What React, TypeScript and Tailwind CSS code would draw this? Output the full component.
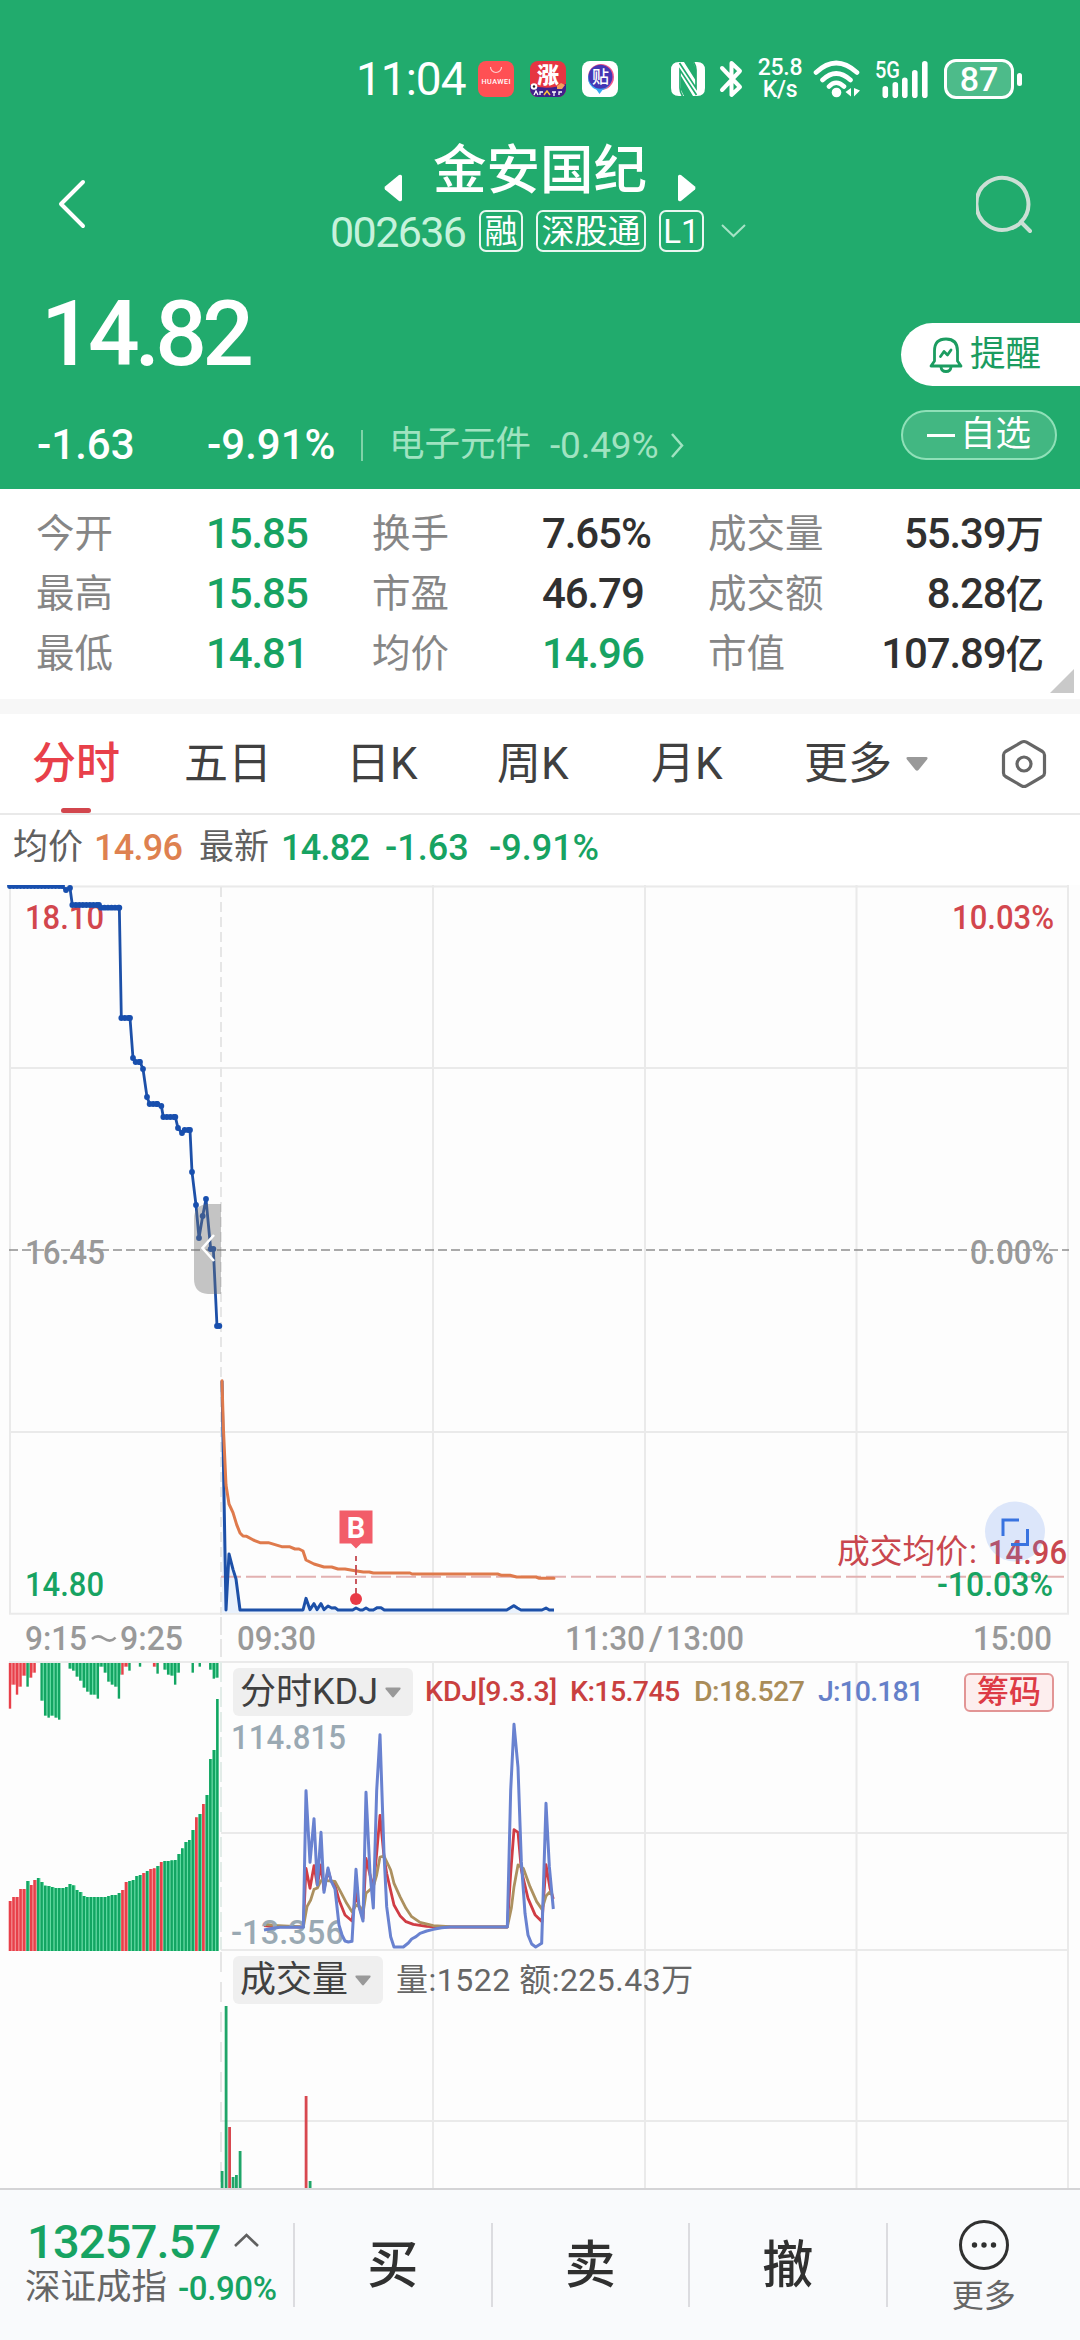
import type { ReactNode } from 'react'
import clsx from 'clsx'

type Point = [number, number]

// Chart data is stored in ticks, three ticks per pixel
const TICK = 3

const toPoints = (data: Point[], dx: number, dy: number) =>
  data.map(([x, y]) => `${((x + dx) / TICK).toFixed(2)},${((y + dy) / TICK).toFixed(2)}`).join(' ')

const auction: Point[] = [
  [30, 3], [186, 3], [198, 15], [210, 9], [217, 60], [297, 60], [303, 68], [358, 68], [364, 399], [390, 399],
  [399, 519], [407, 531], [420, 531], [429, 552], [441, 636], [449, 657], [472, 657], [484, 663], [490, 696],
  [526, 696], [534, 729], [546, 744], [554, 735], [570, 735], [576, 861], [588, 960], [597, 1059], [608, 993],
  [618, 942], [632, 1092], [640, 1092], [651, 1323], [658, 1323],
]

const price: Point[] = [
  [66, 62], [78, 750], [87, 582], [99, 628], [108, 657], [120, 750], [309, 750], [318, 715], [330, 749], [342, 731],
  [351, 749], [363, 731], [372, 749], [384, 738], [395, 744], [405, 743], [414, 750], [458, 750], [468, 744],
  [480, 750], [488, 750], [498, 744], [508, 750], [520, 750], [532, 743], [543, 743], [553, 750], [920, 750],
  [930, 744], [942, 737], [952, 744], [963, 750], [1026, 750], [1038, 744], [1048, 750], [1062, 750],
]

const average: Point[] = [
  [66, 62], [70, 200], [78, 375], [87, 432], [99, 458], [110, 494], [120, 519], [129, 528], [140, 529], [160, 540],
  [180, 548], [205, 548], [245, 560], [268, 560], [285, 567], [297, 567], [309, 573], [318, 600], [342, 612],
  [372, 621], [395, 621], [414, 627], [435, 627], [465, 632], [490, 636], [508, 636], [520, 639], [630, 639],
  [636, 642], [893, 642], [905, 646], [930, 646], [950, 651], [1008, 651], [1018, 655], [1062, 655],
]

const kdjJ: Point[] = [
  [132, 870], [160, 865], [180, 862], [250, 862], [258, 452], [270, 667], [282, 536], [292, 735], [303, 577],
  [312, 757], [324, 684], [333, 722], [345, 747], [357, 855], [366, 885], [375, 903], [385, 906], [396, 904],
  [408, 688], [417, 800], [429, 843], [438, 457], [450, 700], [460, 804], [470, 452], [480, 284], [492, 640],
  [500, 800], [512, 890], [522, 921], [550, 921], [565, 909], [575, 897], [588, 890], [600, 880], [620, 873],
  [640, 868], [665, 863], [690, 861], [862, 861], [872, 452], [882, 253], [894, 382], [904, 665], [915, 820],
  [924, 885], [935, 912], [947, 921], [965, 910], [978, 490], [988, 680], [1000, 807],
]

const kdjK: Point[] = [
  [132, 857], [160, 860], [250, 861], [258, 685], [270, 745], [282, 677], [292, 735], [303, 675], [312, 750],
  [324, 690], [333, 722], [345, 735], [357, 780], [375, 825], [396, 843], [408, 760], [417, 800], [429, 835],
  [438, 655], [460, 745], [470, 640], [480, 526], [492, 650], [500, 700], [522, 795], [540, 827], [558, 845],
  [580, 853], [620, 859], [660, 861], [862, 861], [872, 700], [882, 569], [894, 577], [904, 690], [924, 775],
  [945, 824], [966, 845], [978, 674], [990, 745], [1000, 777],
]

const kdjD: Point[] = [
  [132, 852], [160, 856], [250, 861], [261, 800], [272, 780], [282, 748], [292, 744], [303, 722], [318, 722],
  [345, 724], [360, 752], [380, 790], [396, 815], [408, 795], [420, 800], [429, 820], [438, 760], [460, 740],
  [470, 705], [480, 651], [492, 648], [512, 690], [522, 730], [540, 770], [558, 805], [575, 830], [600, 847],
  [640, 857], [690, 860], [862, 861], [874, 805], [882, 740], [894, 675], [910, 685], [930, 740], [950, 785],
  [966, 808], [978, 768], [988, 757], [998, 765],
]

// Call auction: matched volume grows upwards, unmatched volume hangs from the top
const matched = [
  150, 162, 162, 186, 186, 210, 198, 213, 219, 207, 196, 195, 192, 189, 189, 189, 192, 201, 197, 183, 177, 165, 162,
  162, 162, 162, 162, 162, 165, 168, 168, 174, 183, 207, 210, 213, 225, 228, 234, 240, 246, 248, 255, 267, 270, 270,
  272, 273, 291, 308, 327, 333, 363, 401, 411, 441, 468, 576, 603, 756,
]
const matchedUp = [0, 1, 2, 3, 4, 6, 7, 32, 33, 38, 40, 41, 43, 53, 55]

const unmatched = [
  137, 65, 95, 71, 38, 71, 44, 29, 0, 113, 158, 164, 158, 164, 170, 0, 0, 17, 23, 41, 53, 74, 86, 95, 95, 107, 11, 29,
  56, 65, 71, 107, 35, 11, 23, 0, 0, 11, 0, 0, 0, 11, 32, 0, 20, 35, 38, 65, 29, 0, 0, 0, 29, 0, 11, 0, 0, 20, 47, 44,
]
const unmatchedUp = [0, 1, 2, 3, 4, 6, 7, 32, 33, 41]

const volumes = [
  { x: 222, h: 18, up: false },
  { x: 229.5, h: 62, up: true },
  { x: 226, h: 183, up: false },
  { x: 233, h: 12, up: false },
  { x: 236.3, h: 14, up: false },
  { x: 240, h: 38, up: false },
  { x: 306, h: 93, up: true },
  { x: 310, h: 8, up: false },
]

// Flat stretches of the auction line carry one dot per quote
const auctionDots = auction.flatMap(([x, y], i): Point[] => {
  const next = auction[i + 1]
  if (!next || next[1] !== y) return [[x, y]]
  const dots: Point[] = []
  for (let px = x; px < next[0]; px += 10.5) dots.push([px, y])
  return dots
})

const UP = '#e8404a'
const DOWN = '#12a562'
const GRID = '#eaeaea'
const COLUMNS = [433, 645, 856.5]

function Caret({ className }: { className: string }) {
  return (
    <svg viewBox="0 0 22 14" className={className}>
      <path d="M2 0H20Q22.500 0 21 2.500L12.500 13Q11 14.500 9.500 13L1 2.500Q-.5 0 2 0Z" fill="#999" />
    </svg>
  )
}

function StatusBar() {
  return (
    <div className="flex h-[80px] items-center pl-[356px] text-white">
      <span className="w-[122px] text-[46px] leading-none tracking-[-1px]">11:04</span>
      <svg width="36" height="36" viewBox="0 0 36 36">
        <rect width="36" height="36" rx="8" fill="#ff5054" />
        <path d="M12.500 6a5.500 5.500 0 0 0 11 0" fill="none" stroke="#ffd0d0" strokeWidth="1.200" />
        <text x="18" y="23.300" fontSize="7.200" fontWeight="500" textAnchor="middle" textLength="29" fill="#fff">HUAWEI</text>
      </svg>
      <svg width="36" height="36" viewBox="0 0 36 36" className="ml-4">
        <clipPath id="zhang"><rect width="36" height="36" rx="8" /></clipPath>
        <g clipPath="url(#zhang)">
          <rect width="36" height="36" fill="#e63542" />
          <path d="M0 24Q18 30 36 23V36H0Z" fill="#40208c" />
          <circle cx="4" cy="25.500" r="3.300" fill="#fff" />
          <circle cx="4" cy="25.500" r="1.200" fill="#222" />
          <path d="M27 25l4-3 4 2-3 4h-5z" fill="#f4a05a" />
          <text x="18" y="22" fontSize="22" fontWeight="900" textAnchor="middle" fill="#fff">涨</text>
          <path d="M4 34l2-4 2 4M10 34v-3h3M22 31h4M24 31v4M29 34v-3h3" fill="none" stroke="#fff" strokeWidth="1.300" />
          <path d="M14 34l3-4 3 4" fill="none" stroke="#ffc23d" strokeWidth="1.500" />
        </g>
      </svg>
      <svg width="36" height="36" viewBox="0 0 36 36" className="ml-4">
        <rect width="36" height="36" rx="8" fill="#fff" />
        <circle cx="19" cy="16" r="13" fill="#f0568c" />
        <path d="M17.500 4.500a12.500 12.500 0 0 1 3 24.500l-3 4-3-4.200A12.500 12.500 0 0 1 17.500 4.500Z" fill="#37a6f2" />
        <circle cx="18.500" cy="15.800" r="12" fill="#4436b4" />
        <text x="18.500" y="22" fontSize="17" fontWeight="500" textAnchor="middle" fill="#fff">贴</text>
      </svg>
      <svg width="34" height="34" viewBox="0 0 34 34" className="ml-[53px]">
        <path d="M8 0H9V34H8Q0 34 0 26V8Q0 0 8 0ZM25 0H26Q34 0 34 8V26Q34 34 26 34H25Z" fill="#fff" />
        <path d="M8 0H13L25 19V7L22 0H26V34H22L10 14V28L13 34H8Z" fill="#fff" />
        <path d="M8.500 1 25 26V8Q25 4 22.500 0M25.500 33 9 8V26Q9 30 11.500 34" fill="none" stroke="#21ab6d" strokeWidth="1.700" />
      </svg>
      <svg width="24" height="38" viewBox="0 0 24 38" className="ml-[14px]" fill="none" stroke="#fff" strokeWidth="4" strokeLinejoin="round" strokeLinecap="round">
        <path d="M3 8 21 27 12.500 35V3L21 11 3 30" />
      </svg>
      <div className="ml-[13px] flex w-[48px] flex-col items-center text-[23px] font-medium leading-[22px] tracking-[-0.3px]">
        <span>25.8</span>
        <span>K/s</span>
      </div>
      <svg width="48" height="38" viewBox="0 0 48 38" className="ml-[9px]" fill="none" stroke="#fff" strokeWidth="4.600" strokeLinecap="round">
        <path d="M3 12.500Q23 -6.500 44 12.500M9.500 20Q23 7 37.500 20M16 26.500Q23 19 31 26.500" />
        <circle cx="23.500" cy="32.500" r="4.800" fill="#fff" stroke="none" />
        <path d="M38 28v8.500l-5.500-4.500zM41 28v8.500l6-6z" fill="#fff" stroke="none" />
      </svg>
      <svg width="54" height="38" viewBox="0 0 54 38" className="ml-[14px] overflow-visible" fill="#fff">
        <text x="0" y="18" fontSize="24" fontWeight="500" textLength="25" lengthAdjust="spacingAndGlyphs">5G</text>
        <rect x="7.500" y="26" width="5.600" height="12" rx="2.800" />
        <rect x="17.500" y="22" width="5.600" height="16" rx="2.800" />
        <rect x="27" y="17.500" width="5.600" height="20.500" rx="2.800" />
        <rect x="37" y="10" width="5.600" height="28" rx="2.800" />
        <rect x="47" y="1" width="5.600" height="37" rx="2.800" />
      </svg>
      <div className="ml-[15px] flex h-[40px] w-[70px] items-center justify-center rounded-[12px] border-[3px] border-white bg-white/20">
        <span className="text-[34px] font-medium leading-none">87</span>
      </div>
      <div className="ml-[3px] h-[13px] w-[5px] rounded-full bg-white" />
    </div>
  )
}

function Tag({ className, children }: { className: string; children: ReactNode }) {
  return (
    <span className={clsx('flex h-[42px] shrink-0 items-center justify-center whitespace-nowrap rounded-[7px] border-2 border-white/90 text-[33px] leading-none text-white', className)}>
      {children}
    </span>
  )
}

function Header() {
  return (
    <header className="flex h-[489px] shrink-0 flex-col bg-[#21ab6d] text-white">
      <div className="h-[116px] shrink-0 pt-[39px]">
        <StatusBar />
      </div>
      <div className="flex h-[150px] shrink-0 items-start pl-[58px] pr-[46px]">
        <svg width="28" height="50" viewBox="0 0 28 50" className="mt-[63px] shrink-0" fill="none" stroke="#fff" strokeWidth="4" strokeLinecap="round" strokeLinejoin="round">
          <path d="M25 3 3 25 25 47" />
        </svg>
        <div className="ml-[244px] flex w-[440px] flex-col">
          <div className="flex h-[80px] items-center pl-[54px] pt-[30px]">
            <svg width="18" height="28" viewBox="0 0 18 28" className="mt-[33px]"><path d="M18 2V26Q17 28 15 27L1 15.500Q0 14 1 12.500L15 1Q17 0 18 2Z" fill="#fff" /></svg>
            <h1 className="ml-[31px] text-[53.500px] font-medium leading-none">金安国纪</h1>
            <svg width="18" height="28" viewBox="0 0 18 28" className="ml-[31px] mt-[33px]"><path d="M0 2V26Q1 28 3 27L17 15.500Q18 14 17 12.500L3 1Q1 0 0 2Z" fill="#fff" /></svg>
          </div>
          <div className="mt-[14px] flex h-[42px] items-center">
            <span className="w-[149px] shrink-0 pt-[2px] text-[43px] leading-none tracking-[-1.6px] text-[#c6f2dc]">002636</span>
            <Tag className="w-[44px]">融</Tag>
            <Tag className="ml-[13px] w-[110px]">深股通</Tag>
            <Tag className="ml-[13px] w-[45px]">L1</Tag>
            <svg width="25" height="14" viewBox="0 0 25 14" className="ml-[17px]" fill="none" stroke="#a6e3c6" strokeWidth="2"><path d="M1 1 12.500 12 24 1" /></svg>
          </div>
        </div>
        <svg width="58" height="60" viewBox="0 0 58 60" className="ml-auto mt-[59px]" fill="none" stroke="#cbdfd5" strokeWidth="4" strokeLinecap="round">
          <path d="M45 47A26 26 0 1 0 36 53M45 47 54 56" />
          <path d="M36 53Q42 51 45 47" />
        </svg>
      </div>
      <div className="flex h-[223px] items-start">
        <div className="flex w-[890px] flex-col pl-[37px]">
          <span className="mt-[18px] pl-[4px] text-[91px] font-medium leading-[100px] tracking-[-4.800px]">14.82</span>
          <div className="mt-[40px] flex h-[42px] items-center text-[42px] font-medium leading-none">
            <span className="w-[170px]">-1.63</span>
            <span className="w-[154px]">-9.91%</span>
            <span className="h-[31px] w-[2px] bg-[#7fd3a8]" />
            <span className="ml-[26px] text-[35.500px] font-normal text-[#a0e3c1]">电子元件</span>
            <span className="ml-[19px] text-[37px] font-normal tracking-[-0.2px] text-[#a0e3c1]">-0.49%</span>
            <svg width="14" height="25" viewBox="0 0 14 25" className="ml-[12px]" fill="none" stroke="#a0e3c1" strokeWidth="2.500"><path d="M2 1 12 12.500 2 24" /></svg>
          </div>
        </div>
        <div className="flex grow flex-col pl-[11px] pt-[57px]">
          <div className="flex h-[63px] items-center rounded-l-full bg-white pl-[28px] text-[35.500px] text-[#1b9c60]">
            <svg width="34" height="36" viewBox="0 0 34 36" className="mr-[7px]" fill="none" stroke="#1b9c60" strokeWidth="2.800" strokeLinejoin="round" strokeLinecap="round">
              <path d="M5.500 24V14Q5.500 2 17 2T28.500 14V24L32 29H2Z" />
              <path d="M12 30Q12.500 34.500 17 34.500T22 30M11.500 19.500 15 14.500 18.500 18 22 13" />
            </svg>
            <span className="leading-none">提醒</span>
          </div>
          <div className="mt-[24px] flex h-[50px] w-[156px] items-center justify-center rounded-full border-2 border-[#8fe0b8] bg-white/15 text-[35.500px]">
            <span className="mr-[5px] h-[3px] w-[28px] bg-white" />
            <span className="leading-none">自选</span>
          </div>
        </div>
      </div>
    </header>
  )
}

const stats = [
  { label: '今开', value: '15.85', down: true },
  { label: '换手', value: '7.65%' },
  { label: '成交量', value: '55.39万' },
  { label: '最高', value: '15.85', down: true },
  { label: '市盈', value: '46.79' },
  { label: '成交额', value: '8.28亿' },
  { label: '最低', value: '14.81', down: true },
  { label: '均价', value: '14.96', down: true },
  { label: '市值', value: '107.89亿' },
]

function Stats() {
  return (
    <section className="relative h-[210px] shrink-0 bg-white pl-[36px] pr-[37px] pt-[15px]">
      <div className="grid grid-cols-[336px_336px_335px]">
        {stats.map((item, idx) => (
          <div key={item.label} className="flex h-[60px] items-center leading-none">
            <span className={clsx('text-[38.500px] text-[#868686]', idx % 3 !== 2 && 'w-[170px]')}>{item.label}</span>
            <span
              className={clsx(
                'text-[42px] font-medium tracking-[-1.100px]',
                idx % 3 === 2 && 'ml-auto',
                item.down ? 'text-[#17a362]' : 'text-[#303030]',
              )}
            >
              {item.value.replace(/[万亿]/, '')}
              {/[万亿]/.test(item.value) && <span className="text-[38.500px]">{item.value.slice(-1)}</span>}
            </span>
          </div>
        ))}
      </div>
      <svg width="24" height="24" viewBox="0 0 24 24" className="absolute bottom-[6px] right-[6px]"><path d="M24 0V24H0Z" fill="#c9c9c9" /></svg>
    </section>
  )
}

function Tabs() {
  return (
    <nav className="relative flex h-[101px] shrink-0 items-center border-b-2 border-[#e9e9e9] bg-white pl-[32px] pt-[1px] text-[44px] leading-none text-[#404040]">
      <span className="w-[152px] font-medium text-[#e8404a]">分时</span>
      <span className="w-[162px]">五日</span>
      <span className="w-[151px]">日K</span>
      <span className="w-[154px]">周K</span>
      <span className="w-[153px]">月K</span>
      <span>更多</span>
      <Caret className="ml-[14px] h-[14px] w-[22px]" />
      <svg width="46" height="50" viewBox="0 0 46 50" className="ml-[73px]" fill="none" stroke="#666" strokeWidth="3.200" strokeLinejoin="round">
        <path d="M20.500 3.200Q23 1.800 25.500 3.200L41.500 12.500Q43.500 13.800 43.500 16V34Q43.500 36.200 41.500 37.500L25.500 46.800Q23 48.200 20.500 46.800L4.500 37.500Q2.500 36.200 2.500 34V16Q2.500 13.800 4.500 12.500Z" />
        <circle cx="23" cy="25" r="7" />
      </svg>
      <span className="absolute bottom-0 left-[61px] h-[5px] w-[30px] rounded-full bg-[#d2464d]" />
    </nav>
  )
}

function Legend() {
  return (
    <div className="flex h-[70px] shrink-0 items-center bg-white pb-[5px] pl-[13px] text-[36px] font-medium leading-none">
      <span className="w-[81px] text-[35px] font-normal text-[#606060]">均价</span>
      <span className="w-[105px] tracking-[-0.7px] text-[#de8150]">14.96</span>
      <span className="w-[82px] text-[35px] font-normal text-[#606060]">最新</span>
      <span className="w-[104px] tracking-[-0.7px] text-[#17a362]">14.82</span>
      <span className="w-[104px] text-[#17a362]">-1.63</span>
      <span className="text-[#17a362]">-9.91%</span>
    </div>
  )
}

function ChartText({ x, y, width, fill, size = 33, children }: { x: number; y: number; width: number; fill: string; size?: number; children: string }) {
  return (
    <text x={x} y={y} fontSize={size} fontWeight="500" fill={fill} textLength={width} lengthAdjust="spacingAndGlyphs">
      {children}
    </text>
  )
}

function PriceChart() {
  return (
    <svg width="1080" height="730" viewBox="0 0 1080 730" className="block shrink-0">
      <path d="M9 1.500H1069M10 0V729M10 183H1068M10 547H1068M9 728.700H1069M1068 0V729" stroke={GRID} strokeWidth="2" fill="none" />
      {COLUMNS.map((x) => (
        <line key={x} x1={x} x2={x} y1="0" y2="729" stroke={GRID} strokeWidth="2" />
      ))}
      <line x1="221" x2="221" y1="2" y2="730" stroke="#e6e6e6" strokeWidth="2" strokeDasharray="10 5" />
      <line x1="9" x2="1069" y1="365" y2="365" stroke="#8f8f8f" strokeWidth="1.600" strokeDasharray="9 4" />

      <ChartText x={25} y={44} width={79} fill="#d2464d">18.10</ChartText>
      <ChartText x={952} y={44} width={102} fill="#d2464d">10.03%</ChartText>
      <ChartText x={25} y={379} width={80} fill="#999">16.45</ChartText>
      <ChartText x={970} y={379} width={84} fill="#999">0.00%</ChartText>
      <ChartText x={25} y={711} width={79} fill="#17a362">14.80</ChartText>

      <polyline points={toPoints(auction, 0, 0)} fill="none" stroke="#1d50a8" strokeWidth="2.800" />
      {auctionDots.map(([x, y], idx) => (
        <circle key={idx} cx={x / TICK} cy={y / TICK} r="2.900" fill="#184fae" />
      ))}
      {/* Handle that folds the auction part away */}
      <path d="M221 319V409H208Q194 408 194 394V334Q194 320 208 319Z" fill="#6f6f6f" fillOpacity=".4" />
      <path d="M214 350 202.500 363 214 376" fill="none" stroke="#fff" strokeWidth="2.600" />

      <polygon points={`${toPoints(price, 600, 1425)} 554,728 222,728`} fill="#e9f1fc" />
      <line x1="221" x2="1064" y1="691.700" y2="691.700" stroke="#e2b1b1" strokeWidth="2" strokeDasharray="20 5" />
      <polyline points={toPoints(price, 600, 1425)} fill="none" stroke="#1d50a8" strokeWidth="3" strokeLinejoin="round" />
      <polyline points={toPoints(average, 600, 1425)} fill="none" stroke="#df7a4c" strokeWidth="3" strokeLinejoin="round" strokeLinecap="round" />

      {/* Buy marker */}
      <path d="M339.500 625.500H372.500V658.500H361L356 663.500 351 658.500H339.500Z" fill="#f25d69" />
      <text x="356" y="652.500" fontSize="29" fontWeight="700" fill="#fff" textAnchor="middle">B</text>
      <line x1="356" x2="356" y1="671" y2="709" stroke="#c4474f" strokeWidth="1.800" strokeDasharray="5 4 10 4" />
      <circle cx="356" cy="714" r="6" fill="#e93b47" />

      <text x="837" y="678" fontSize="33" fill="#c9474e" textLength="131" lengthAdjust="spacingAndGlyphs">成交均价</text>
      <text x="969" y="678" fontSize="33" fill="#c9474e">:</text>
      <ChartText x={988} y={679} width={79} fill="#c9474e">14.96</ChartText>
      <circle cx="1015" cy="646.500" r="30" fill="#5b8df0" fillOpacity=".2" />
      <path d="M1019 635H1003V651M1027.500 644V659.500H1011" fill="none" stroke="#3873e0" strokeWidth="3" />
      <ChartText x={937} y={711} width={116} fill="#17a362">-10.03%</ChartText>
    </svg>
  )
}

function TimeAxis() {
  return (
    <svg width="1080" height="47" viewBox="0 0 1080 47" className="block shrink-0">
      <line x1="221" x2="221" y1="2" y2="45" stroke="#e6e6e6" strokeWidth="2" strokeDasharray="18 4" />
      <ChartText x={25} y={35} width={62} fill="#999">9:15</ChartText>
      <path d="M92 24Q97.500 19 104 23.500T115.500 22.500" fill="none" stroke="#999" strokeWidth="2.600" />
      <ChartText x={120} y={35} width={63} fill="#999">9:25</ChartText>
      <ChartText x={237} y={35} width={79} fill="#999">09:30</ChartText>
      <ChartText x={565} y={35} width={80} fill="#999">11:30</ChartText>
      <ChartText x={649} y={35} width={14} fill="#999">/</ChartText>
      <ChartText x={666} y={35} width={78} fill="#999">13:00</ChartText>
      <ChartText x={973} y={35} width={79} fill="#999">15:00</ChartText>
    </svg>
  )
}

function IndicatorPicker({ label, className }: { label: string; className: string }) {
  return (
    <button className={clsx('flex h-[48px] items-center justify-between rounded-md bg-[#efefef] pl-[7px] pr-[12px] text-[36px] leading-none text-[#404040]', className)}>
      {label}
      <Caret className="h-[11px] w-[16px]" />
    </button>
  )
}

function AuctionBars() {
  return (
    <g>
      {matched.map((h, idx) => {
        const up = matchedUp.includes(idx)
        const height = h / TICK
        const x = 10 + idx * 3.514
        return (
          <g key={idx}>
            <rect x={x - 1.2} y={289 - height} width={idx === matched.length - 1 ? 2.4 : 3.514} height={height} fill={up ? '#f48e92' : '#62dda4'} />
            <rect x={x - 1.2} y={289 - height} width="2.400" height={height} fill={up ? UP : DOWN} />
          </g>
        )
      })}
      {unmatched.map((h, idx) => {
        const up = unmatchedUp.includes(idx)
        const x = 10 + idx * 3.514
        return (
          <g key={idx}>
            {unmatched[idx + 1] > 0 && <rect x={x + 1} y="1" width="1.500" height={Math.min(h, unmatched[idx + 1]) / TICK} fill={up ? '#f48e92' : '#62dda4'} />}
            <rect x={x - 1.2} y="1" width="2.400" height={h / TICK} fill={up ? UP : DOWN} />
          </g>
        )
      })}
    </g>
  )
}

function KdjPanel() {
  return (
    <section className="relative h-[288px] shrink-0">
      <svg width="1080" height="288" viewBox="0 0 1080 288" className="absolute inset-0 overflow-visible">
        <path d="M9 0H1069M221 171H1068M221 288H1068M1068 0V288" stroke={GRID} strokeWidth="2" fill="none" />
        {COLUMNS.map((x) => (
          <line key={x} x1={x} x2={x} y1="0" y2="288" stroke={GRID} strokeWidth="2" />
        ))}
        <line x1="221" x2="221" y1="0" y2="288" stroke="#e2ece8" strokeWidth="2" strokeDasharray="20 5" />
        <AuctionBars />
        <polyline points={toPoints(kdjK, 660, -66)} fill="none" stroke="#d03c44" strokeWidth="2.800" strokeLinejoin="round" />
        <polyline points={toPoints(kdjD, 660, -66)} fill="none" stroke="#ac905f" strokeWidth="2.800" strokeLinejoin="round" />
        <ChartText x={231} y={87} width={115} fill="#9aa9b3">114.815</ChartText>
        <ChartText x={231} y={282} width={113} fill="#9aa9b3">-13.356</ChartText>
        <polyline points={toPoints(kdjJ, 660, -66)} fill="none" stroke="#6982d0" strokeWidth="3" strokeLinejoin="round" />
      </svg>
      <div className="relative flex items-center pl-[233px] pr-[26px] pt-[6px] text-[28.500px] font-medium leading-none">
        <IndicatorPicker label="分时KDJ" className="w-[180px] font-normal" />
        <span className="ml-[12px] w-[145px] whitespace-nowrap text-[#c9403f]">KDJ[9.3.3]</span>
        <span className="w-[124px] tracking-[-0.6px] text-[#c9403f]">K:15.745</span>
        <span className="w-[124px] tracking-[-0.6px] text-[#a98c58]">D:18.527</span>
        <span className="tracking-[-0.9px] text-[#6580c9]">J:10.181</span>
        <span className="ml-auto flex h-[39px] w-[90px] items-center justify-center rounded-[6px] border-2 border-[#e29595] bg-[#fdeeee] text-[32px] leading-none text-[#dd3b45]">筹码</span>
      </div>
    </section>
  )
}

function VolumePanel() {
  return (
    <section className="relative h-[238px] shrink-0">
      <svg width="1080" height="238" viewBox="0 0 1080 238" className="absolute inset-0">
        <path d="M221 0H1068M221 171H1068M1068 0V238" stroke={GRID} strokeWidth="2" fill="none" />
        {COLUMNS.map((x) => (
          <line key={x} x1={x} x2={x} y1="0" y2="238" stroke={GRID} strokeWidth="2" />
        ))}
        <line x1="221" x2="221" y1="2" y2="238" stroke="#e6e6e6" strokeWidth="2" strokeDasharray="20 10" />
        {volumes.map((bar) => (
          <rect key={bar.x} x={bar.x - 1.3} y={239 - bar.h} width="2.800" height={bar.h} fill={bar.up ? '#d8484f' : '#1fa568'} />
        ))}
      </svg>
      <div className="relative flex items-center pl-[233px] pt-[6px] leading-none text-[#666]">
        <IndicatorPicker label="成交量" className="w-[150px]" />
        <span className="ml-[13px] text-[32px] tracking-[0.5px]">量:1522 额:225.43万</span>
      </div>
    </section>
  )
}

function BottomBar() {
  return (
    <footer className="flex h-[152px] shrink-0 items-start border-t-2 border-[#d4d4d6] bg-[#f9fafc] pt-[33px]">
      <div className="w-[293px] pl-[25px]">
        <div className="flex h-[37px] items-center text-[47px] font-medium leading-none text-[#17a362]">
          <span className="w-[209px] pl-[2px] tracking-[-0.8px]">13257.57</span>
          <svg width="25" height="14" viewBox="0 0 25 14" className="-mt-1" fill="none" stroke="#606060" strokeWidth="2.600"><path d="M1 13 12.500 2 24 13" /></svg>
        </div>
        <div className="mt-[10px] flex h-[36px] items-center leading-none">
          <span className="w-[153px] text-[35.500px] text-[#666]">深证成指</span>
          <span className="text-[33px] font-medium tracking-[-0.4px] text-[#17a362]">-0.90%</span>
        </div>
      </div>
      {['买', '卖', '撤'].map((label) => (
        <div key={label} className="flex h-[84px] w-[197.500px] items-center justify-center border-l-2 border-[#dcdce0] text-[51px] font-medium leading-none text-[#303030]">
          {label}
        </div>
      ))}
      <div className="flex h-[84px] grow flex-col items-center border-l-2 border-[#dcdce0]">
        <svg width="52" height="52" viewBox="0 0 52 52" className="-mt-[4px] shrink-0" fill="#303030">
          <circle cx="26" cy="26" r="23.500" fill="none" stroke="#303030" strokeWidth="3" />
          <circle cx="16.500" cy="26" r="2.700" />
          <circle cx="26" cy="26" r="2.700" />
          <circle cx="35.500" cy="26" r="2.700" />
        </svg>
        <span className="mt-[9px] text-[32px] leading-none text-[#666]">更多</span>
      </div>
    </footer>
  )
}

export default function App() {
  return (
    <div className="flex h-[2340px] w-[1080px] flex-col overflow-hidden bg-[#fdfdfd] font-['Roboto','Noto_Sans_CJK_SC',sans-serif]">
      <Header />
      <Stats />
      <div className="h-[15px] shrink-0 bg-[#f7f7f7]" />
      <Tabs />
      <Legend />
      <PriceChart />
      <TimeAxis />
      <KdjPanel />
      <VolumePanel />
      <BottomBar />
    </div>
  )
}
